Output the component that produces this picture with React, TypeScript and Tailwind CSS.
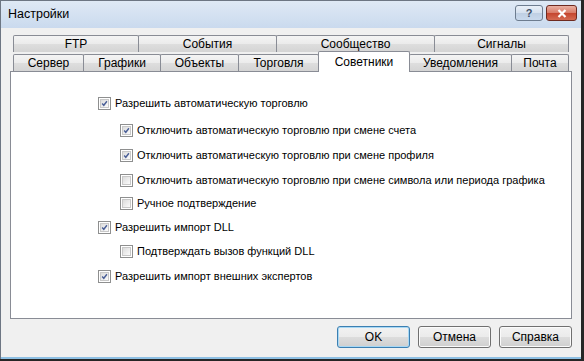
import React from "react"

const FONT = { fontFamily: '"Liberation Sans", Arial, sans-serif' }

function Check({ on }: { on: boolean }) {
  return (
    <span className="w-[13px] h-[13px] shrink-0 border border-[#8e8f8f] bg-white p-px flex">
      <span className="flex-1 border border-[#c8c8c8] bg-gradient-to-br from-[#dcdcdc] to-[#fbfbfb] relative">
        {on && (
          <svg viewBox="0 0 9 9" className="absolute inset-0 w-full h-full">
            <path d="M1.5 4.5 L3.6 6.8 L7.6 1.6" fill="none" stroke="#4a5f97" strokeWidth="1.8" />
          </svg>
        )}
      </span>
    </span>
  )
}

function Row({ on, label, indent, mt }: { on: boolean; label: string; indent?: boolean; mt: string }) {
  return (
    <div className={`flex items-center gap-[4px] h-[13px] ${indent ? "pl-[22px]" : ""} ${mt}`}>
      <Check on={on} />
      <span className="text-[11px] text-black leading-none">{label}</span>
    </div>
  )
}

function Tab({ label, w, selected }: { label: string; w: string; selected?: boolean }) {
  if (selected) {
    return (
      <div
        className={`${w} h-[21px] -mt-[3px] -mb-px -ml-px relative z-10 border border-b-0 border-[#898c95] bg-white rounded-t-[2px] flex items-center justify-center text-[12px] text-black`}
      >
        {label}
      </div>
    )
  }
  return (
    <div
      className={`${w} h-[17px] -ml-px border border-b-0 border-[#898c95] rounded-t-[2px] bg-[linear-gradient(#f4f4f4,#ebebeb_50%,#dedede_50%,#d4d4d4)] flex items-center justify-center text-[12px] text-black`}
    >
      {label}
    </div>
  )
}

function Btn({ label, def }: { label: string; def?: boolean }) {
  return (
    <div
      className={`w-[73px] h-[22px] rounded-[3px] border ${
        def ? "border-[#3c7fb1] shadow-[inset_0_0_0_1px_#a7d8f5]" : "border-[#707070] shadow-[inset_0_0_0_1px_#fbfbfb]"
      } bg-[linear-gradient(#f2f2f2,#ebebeb_50%,#dddddd_50%,#cfcfcf)] flex items-center justify-center text-[12px] text-black`}
    >
      {label}
    </div>
  )
}

export default function App() {
  return (
    <div className="w-[584px] h-[361px] bg-[#262626] overflow-hidden" style={FONT}>
      <div className="w-[581px] h-[359px] flex flex-col bg-[#f0f0f0] border-l border-t border-[#6d7683]">
        <div className="h-[27px] shrink-0 flex items-center justify-between pl-[7px] pr-[4px] bg-gradient-to-b from-[#dfe9f5] to-[#cadaee]">
          <span className="text-[12.5px] text-black">Настройки</span>
          <div className="flex items-center gap-[3px] -mt-[3px]">
            <div className="w-[28px] h-[16px] rounded-[3px] border border-[#6d7c8f] bg-[linear-gradient(#e9f0f8,#d5e0ee_50%,#bfcfe3_50%,#c9d9ec)] flex items-center justify-center text-[11px] font-bold text-[#3e4f66]">
              ?
            </div>
            <div className="w-[31px] h-[16px] rounded-[3px] border border-[#6e2a20] bg-[linear-gradient(#eab0a2,#d87a66_50%,#c4442d_50%,#d46b52)] flex items-center justify-center">
              <svg viewBox="0 0 10 9" className="w-[10px] h-[9px]">
                <path d="M1.5 1 L8.5 8 M8.5 1 L1.5 8" stroke="white" strokeWidth="2.2" />
              </svg>
            </div>
          </div>
        </div>

        <div className="flex-1 flex flex-col pl-[9px] pr-[9px] border-b-[2px] border-[#8ec0e4]">
          <div className="pt-[7px] pl-[3px] flex flex-col">
            <div className="flex pl-px">
              <Tab label="FTP" w="w-[126px]" />
              <Tab label="События" w="w-[139px]" />
              <Tab label="Сообщество" w="w-[159px]" />
              <Tab label="Сигналы" w="w-[135px]" />
            </div>
            <div className="flex pl-px mt-[2px]">
              <Tab label="Сервер" w="w-[71px]" />
              <Tab label="Графики" w="w-[78px]" />
              <Tab label="Объекты" w="w-[79px]" />
              <Tab label="Торговля" w="w-[81px]" />
              <Tab label="Советники" w="w-[92px]" selected />
              <Tab label="Уведомления" w="w-[103px]" />
              <Tab label="Почта" w="w-[58px]" />
            </div>
          </div>
          <div className="h-[248px] border border-[#898c95] bg-white flex flex-col pl-[87px]">
            <Row on label="Разрешить автоматическую торговлю" mt="mt-[25px]" />
            <Row on indent label="Отключить автоматическую торговлю при смене счета" mt="mt-[14px]" />
            <Row on indent label="Отключить автоматическую торговлю при смене профиля" mt="mt-[12px]" />
            <Row on={false} indent label="Отключить автоматическую торговлю при смене символа или периода графика" mt="mt-[12px]" />
            <Row on={false} indent label="Ручное подтверждение" mt="mt-[10px]" />
            <Row on label="Разрешить импорт DLL" mt="mt-[11px]" />
            <Row on={false} indent label="Подтверждать вызов функций DLL" mt="mt-[11px]" />
            <Row on label="Разрешить импорт внешних экспертов" mt="mt-[12px]" />
          </div>
          <div className="flex justify-end gap-[8px] mt-[7px] pr-0">
            <Btn label="OK" def />
            <Btn label="Отмена" />
            <Btn label="Справка" />
          </div>
        </div>
      </div>
    </div>
  )
}
